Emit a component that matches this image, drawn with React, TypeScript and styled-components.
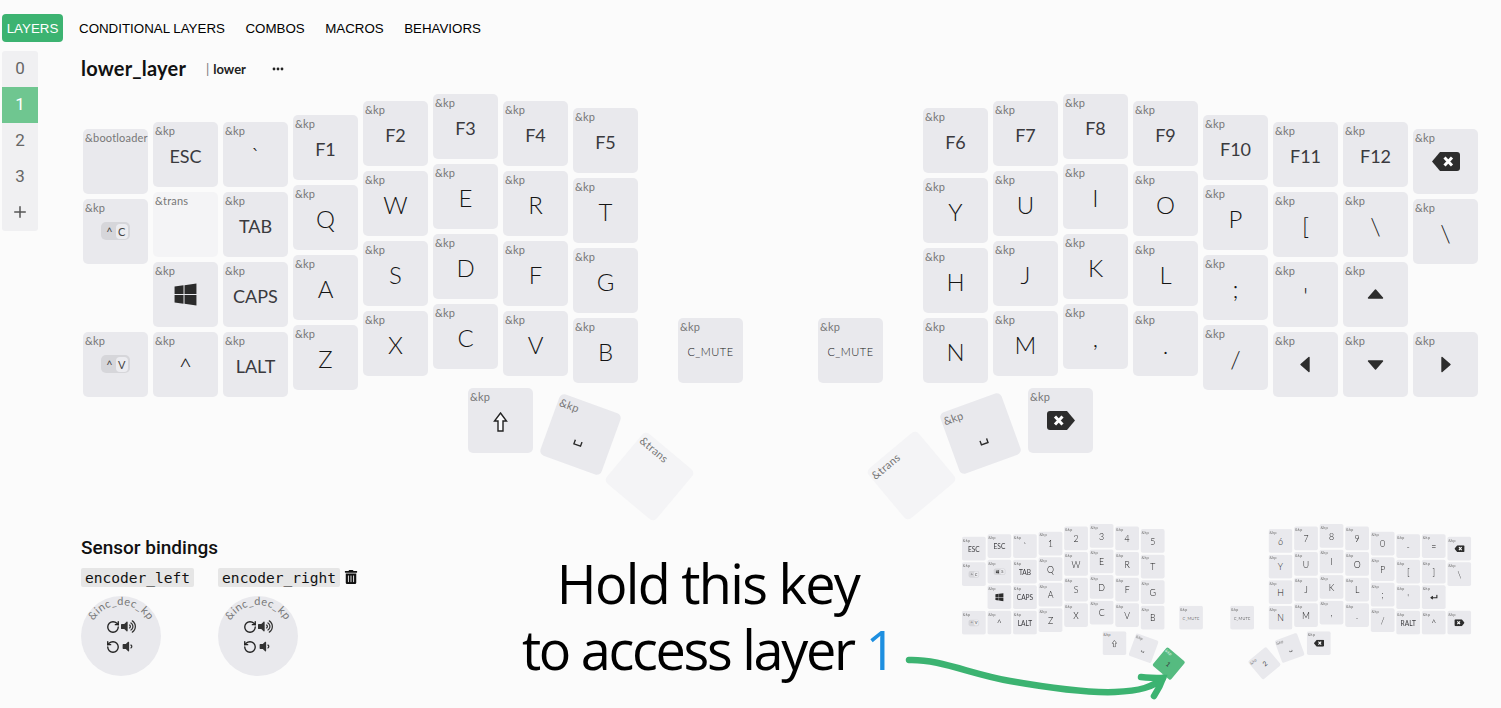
import React from 'react';
import styled, { createGlobalStyle } from 'styled-components';
import { FaWindows, FaVolumeUp, FaVolumeDown, FaTrashAlt } from 'react-icons/fa';
import { RotateCw, RotateCcw, Plus } from 'lucide-react';

const Global = createGlobalStyle`
  html, body { margin: 0; padding: 0; background: #fbfbfb; }
  body { font-family: "Lato", "Noto Sans", sans-serif; color: #222; overflow: hidden; }
  #root { width: 1501px; height: 708px; }
`;

const Page = styled.div`
  position: relative;
  width: 1501px;
  height: 708px;
  overflow: hidden;
`;
const Nav = styled.nav`
  display: flex;
  align-items: center;
  gap: 8.5px;
  padding: 14px 0 0 2px;
  height: 28px;
`;
const NavItem = styled.div<{ $active?: boolean }>`
  height: 28px;
  padding: 0 ${p => (p.$active ? '0' : '6px')};
  width: ${p => (p.$active ? '61px' : 'auto')};
  text-align: center;
  border-radius: 4px;
  font: 13.33px/29px "Liberation Sans", Arial, sans-serif;
  color: ${p => (p.$active ? '#fff' : '#000')};
  background: ${p => (p.$active ? '#3cb371' : 'transparent')};
  margin-right: ${p => (p.$active ? '1.5px' : '0')};
`;
const Body = styled.div`
  display: flex;
  padding: 9px 0 0 2px;
`;
const Sidebar = styled.ul`
  list-style: none;
  margin: 0;
  padding: 0;
  width: 36px;
  height: 180px;
  background: #f0f0f2;
  border-radius: 3px;
  overflow: hidden;
  flex: none;
`;
const LayerItem = styled.li<{ $active?: boolean }>`
  height: 36px;
  padding-bottom: 2px;
  box-sizing: border-box;
  display: flex;
  align-items: center;
  justify-content: center;
  font: 17px "Roboto", sans-serif;
  color: ${p => (p.$active ? '#fff' : '#666')};
  background: ${p => (p.$active ? '#6fc690' : 'transparent')};
`;
const Main = styled.main`
  flex: 1;
  padding-left: 43px;
`;
const Header = styled.header`
  display: flex;
  align-items: center;
  height: 36px;
`;
const Title = styled.h2`
  margin: 0;
  padding-bottom: 2px;
  font: 700 20px "Lato", sans-serif;
  letter-spacing: 0.2px;
  color: #111;
  width: 125px;
`;
const Nickname = styled.span`
  font: 700 13px "Lato", sans-serif;
  color: #222;
  width: 66px;
  &::before { content: '|'; color: #777; font-weight: 400; margin-right: 4px; }
`;
const Dots = styled.svg`
  width: 12px;
  height: 4px;
`;
const CanvasHolder = styled.div`
  position: relative;
  height: 443px;
  margin: 6.5px 0 0 2px;
`;
const Key = styled.div.attrs<{ $x: number; $y: number; $r?: number }>(p => ({
  style: { left: p.$x, top: p.$y, transform: p.$r ? `rotate(${p.$r}deg)` : undefined },
}))<{ $x: number; $y: number; $r?: number; $tone?: 'trans' | 'green' }>`
  position: absolute;
  width: 65px;
  height: 65px;
  border-radius: 5px;
  display: flex;
  align-items: center;
  justify-content: center;
  background: ${p => (p.$tone === 'trans' ? '#f4f4f6' : p.$tone === 'green' ? '#55bb80' : '#e9e9ed')};
  color: ${p => (p.$tone === 'green' ? '#fff' : '#2b2b2b')};
`;
const Behavior = styled.span<{ $green?: boolean }>`
  position: absolute;
  left: 2px;
  top: 2px;
  font: 400 11px/14px "Lato", sans-serif;
  letter-spacing: 0.2px;
  color: ${p => (p.$green ? '#e6f5ec' : '#777')};
`;
const Legend = styled.span<{ $size: number }>`
  font-size: ${p => p.$size}px;
  font-weight: ${p => (p.$size === 18 ? 400 : 300)};
  color: ${p => (p.$size === 18 ? '#3a3a3e' : '#151515')};
  letter-spacing: ${p => (p.$size > 12 ? 0 : 0.5)}px;
  line-height: 1;
  margin-top: ${p => Math.round(p.$size / 7)}px;
  white-space: nowrap;
`;
const ModPill = styled.span`
  display: inline-flex;
  align-items: center;
  gap: 3px;
  height: 18px;
  padding: 0 2px 0 5px;
  border-radius: 5px;
  background: #d6d6da;
  font-size: 11px;
  color: #444;
`;
const ModKey = styled.span`
  display: inline-flex;
  align-items: center;
  justify-content: center;
  width: 12px;
  height: 15px;
  border-radius: 4px;
  background: #ececf0;
`;
const Section = styled.section``;
const SectionTitle = styled.h3`
  margin: 0;
  font: 500 19px/22px "Roboto", sans-serif;
  color: #111;
`;
const Sensors = styled.div`
  display: flex;
  gap: 24px;
  margin-top: 9px;
`;
const Sensor = styled.div`
  display: flex;
  flex-direction: column;
`;
const SensorHead = styled.div`
  display: flex;
  align-items: center;
  gap: 4px;
`;
const Code = styled.code`
  display: block;
  height: 19px;
  padding: 0 4px;
  border-radius: 2px;
  background: #e6e6e6;
  font: 14.55px/20px "DejaVu Sans Mono", monospace;
  color: #111;
`;
const Dial = styled.div`
  position: relative;
  width: 80px;
  height: 80px;
  margin-top: 9px;
  border-radius: 50%;
  background: #e9e9ed;
  display: flex;
  flex-direction: column;
  align-items: center;
  justify-content: center;
  gap: 5px;
  padding-top: 2px;
  box-sizing: border-box;
`;
const DialArc = styled.svg`
  position: absolute;
  left: 0;
  top: 0;
  width: 80px;
  height: 80px;
  overflow: visible;
`;
const DialRow = styled.div`
  display: flex;
  align-items: center;
  gap: 1px;
  color: #333;
  height: 15px;
  width: 30px;
`;
const Overlay = styled.div`
  position: absolute;
  left: 0;
  top: 0;
  width: 0;
  height: 0;
`;
const Thumb = styled.div<{ $x: number; $y: number }>`
  position: absolute;
  left: ${p => p.$x}px;
  top: ${p => p.$y}px;
  width: 1400px;
  height: 440px;
  transform: scale(0.365);
  transform-origin: 0 0;
  filter: blur(1.3px);
`;
const Callout = styled.div`
  position: absolute;
  left: 456px;
  top: 550px;
  width: 500px;
  text-align: center;
  font: 400 54px/66px "Open Sans", sans-serif;
  color: #000;
`;
const CalloutLine = styled.div<{ $track: number; $shift?: number }>`
  letter-spacing: ${p => p.$track}px;
  margin-left: ${p => p.$shift ?? 0}px;
`;
const Blue = styled.span`
  color: #1e8fe0;
`;
const Arrow = styled.svg`
  position: absolute;
  left: 900px;
  top: 650px;
  width: 280px;
  height: 55px;
`;

/* ---- drawn legends ---- */
const Backspace = ({ flip }: { flip?: boolean }) => (
  <svg width="28" height="19" viewBox="0 0 28 19" style={flip ? { transform: 'scaleX(-1)' } : undefined}>
    <path d="M8 0H25a3 3 0 0 1 3 3V16a3 3 0 0 1-3 3H8L0 9.5Z" fill="#2d2d2d" />
    <path d="M12.5 5.5l7.5 8M20 5.5l-7.5 8" stroke="#fff" strokeWidth="3" />
  </svg>
);
const Tri = ({ dir }: { dir: 'up' | 'down' | 'left' | 'right' }) => {
  const deg = { up: 0, right: 90, down: 180, left: 270 }[dir];
  return (
    <svg width="17" height="17" viewBox="0 0 17 17" style={{ transform: `rotate(${deg}deg)` }}>
      <path d="M8.5 4L15.5 12H1.5Z" fill="#2d2d2d" stroke="#2d2d2d" strokeWidth="1.4" strokeLinejoin="round" />
    </svg>
  );
};
const Shift = () => (
  <svg width="15" height="20" viewBox="0 0 15 20" style={{ marginTop: 3 }}>
    <path d="M7.5 1L13.5 9H10V19H5V9H1.5Z" fill="#fbfbfd" stroke="#222" strokeWidth="1.4" />
  </svg>
);
const Space = () => (
  <svg width="10" height="6" viewBox="0 0 10 6" style={{ marginTop: 19 }}>
    <path d="M1.5 0V4.5H8.5V0" fill="none" stroke="#2b2b2b" strokeWidth="1.4" />
  </svg>
);
const Enter = () => (
  <svg width="24" height="16" viewBox="0 0 24 16">
    <path d="M20 1V9H6M9 5L4 9l5 4" fill="none" stroke="#2b2b2b" strokeWidth="3" />
  </svg>
);

/* ---- key data ---- */
type Spec = { l?: React.ReactNode; b?: string; size?: number; tone?: 'trans' | 'green' };
const t = (text: string): Spec => ({
  l: text,
  size: text === 'C_MUTE' ? 11 : text.length === 1 ? 24 : 18,
});
const icon = (node: React.ReactNode): Spec => ({ l: node });
const trans: Spec = { b: '&trans', tone: 'trans' };
const pill = (mod: React.ReactNode, k: string): Spec =>
  icon(
    <ModPill>
      {mod}
      <ModKey>{k}</ModKey>
    </ModPill>,
  );
const win = icon(<FaWindows size={25} color="#2b2b2b" />);

type Board = {
  left: Spec[][];
  right: Spec[][];
  lthumb: Spec[];
  rthumb: Spec[];
};
const strs = (a: string) => a.split(' ').map(t);

const leftStag = [35, 28, 28, 21, 7, 0, 7, 14];
const rightStag = [14, 7, 0, 7, 21, 28, 28, 35];

const main: Board = {
  left: [
    [{ b: '&bootloader' }, t('ESC'), t('`'), ...strs('F1 F2 F3 F4 F5')],
    [pill('^', 'C'), trans, t('TAB'), ...strs('Q W E R T')],
    [{}, win, t('CAPS'), ...strs('A S D F G')],
    [pill('^', 'V'), t('^'), t('LALT'), ...strs('Z X C V B')],
  ],
  right: [
    [...strs('F6 F7 F8 F9 F10 F11 F12'), icon(<Backspace />)],
    [...strs('Y U I O P [ \\ \\')],
    [...strs('H J K L ; \''), icon(<Tri dir="up" />), {}],
    [...strs('N M , . /'), icon(<Tri dir="left" />), icon(<Tri dir="down" />), icon(<Tri dir="right" />)],
  ],
  lthumb: [icon(<Shift />), icon(<Space />), trans],
  rthumb: [trans, icon(<Space />), icon(<Backspace flip />)],
};
const base: Board = {
  left: [
    [t('ESC'), t('ESC'), t('`'), ...strs('1 2 3 4 5')],
    [pill('^', 'C'), pill(<FaWindows size={10} />, 'S'), t('TAB'), ...strs('Q W E R T')],
    [{}, win, t('CAPS'), ...strs('A S D F G')],
    [pill('^', 'V'), t('^'), t('LALT'), ...strs('Z X C V B')],
  ],
  right: [
    [...strs('6 7 8 9 0 - ='), icon(<Backspace />)],
    [...strs('Y U I O P [ ] \\')],
    [...strs('H J K L ; \''), icon(<Enter />), {}],
    [...strs('N M , . / RALT ^'), icon(<Backspace flip />)],
  ],
  lthumb: [icon(<Shift />), icon(<Space />), { ...t('1'), size: 18, tone: 'green' }],
  rthumb: [{ ...t('2'), size: 18 }, icon(<Space />), icon(<Backspace />)],
};

const OneKey = ({ s, x, y, r }: { s: Spec; x: number; y: number; r?: number }) => (
  <Key $x={x} $y={y} $r={r} $tone={s.tone}>
    <Behavior $green={s.tone === 'green'}>{s.b ?? '&kp'}</Behavior>
    {s.size ? <Legend $size={s.size}>{s.l}</Legend> : s.l}
  </Key>
);

const Keys = ({ board }: { board: Board }) => (
  <>
    {board.left.map((row, ri) =>
      row.map((s, ci) => {
        if (ri === 2 && ci === 0) return null;
        const y = ri === 3 && ci === 0 ? 238 : leftStag[ci] + ri * 70;
        return <OneKey key={`l${ri}-${ci}`} s={s} x={ci * 70} y={y} />;
      }),
    )}
    {board.right.map((row, ri) =>
      row.map((s, ci) => {
        if (ri === 2 && ci === 7) return null;
        const y = ri === 3 && ci === 7 ? 238 : rightStag[ci] + ri * 70;
        return <OneKey key={`r${ri}-${ci}`} s={s} x={840 + ci * 70} y={y} />;
      }),
    )}
    <OneKey s={t('C_MUTE')} x={595} y={224} />
    <OneKey s={t('C_MUTE')} x={735} y={224} />
    <OneKey s={board.lthumb[0]} x={385} y={294} />
    <OneKey s={board.lthumb[1]} x={464.5} y={308} r={20} />
    <OneKey s={board.lthumb[2]} x={533.5} y={350} r={40} />
    <OneKey s={board.rthumb[0]} x={795.5} y={349} r={-40} />
    <OneKey s={board.rthumb[1]} x={864.5} y={307} r={-20} />
    <OneKey s={board.rthumb[2]} x={945} y={294} />
  </>
);

const EncoderDial = ({ id }: { id: string }) => (
  <Dial>
    <DialArc viewBox="0 0 80 80">
      <defs>
        <path id={id} d="M8 41A32 32 0 0 1 72 41" fill="none" />
      </defs>
      <text fontFamily="Lato, sans-serif" fontSize="11" fill="#777" letterSpacing="0.5">
        <textPath href={`#${id}`} startOffset="50%" textAnchor="middle">
          &amp;inc_dec_kp
        </textPath>
      </text>
    </DialArc>
    <DialRow>
      <RotateCw size={14} strokeWidth={2.3} color="#222" />
      <FaVolumeUp size={15} color="#333" />
    </DialRow>
    <DialRow>
      <RotateCcw size={14} strokeWidth={2.3} color="#222" />
      <FaVolumeDown size={13} color="#333" />
    </DialRow>
  </Dial>
);

export default function App() {
  return (
    <Page>
      <Global />
      <Nav>
        <NavItem $active>LAYERS</NavItem>
        <NavItem>CONDITIONAL LAYERS</NavItem>
        <NavItem>COMBOS</NavItem>
        <NavItem>MACROS</NavItem>
        <NavItem>BEHAVIORS</NavItem>
      </Nav>
      <Body>
        <Sidebar>
          <LayerItem>0</LayerItem>
          <LayerItem $active>1</LayerItem>
          <LayerItem>2</LayerItem>
          <LayerItem>3</LayerItem>
          <LayerItem>
            <Plus size={18} color="#555" />
          </LayerItem>
        </Sidebar>
        <Main>
          <Header>
            <Title>lower_layer</Title>
            <Nickname>lower</Nickname>
            <Dots viewBox="0 0 12 4">
              <circle cx="2" cy="2" r="1.4" fill="#222" />
              <circle cx="6" cy="2" r="1.4" fill="#222" />
              <circle cx="10" cy="2" r="1.4" fill="#222" />
            </Dots>
          </Header>
          <CanvasHolder>
            <Keys board={main} />
          </CanvasHolder>
          <Section>
            <SectionTitle>Sensor bindings</SectionTitle>
            <Sensors>
              <Sensor>
                <SensorHead>
                  <Code>encoder_left</Code>
                </SensorHead>
                <EncoderDial id="arc-left" />
              </Sensor>
              <Sensor>
                <SensorHead>
                  <Code>encoder_right</Code>
                  <FaTrashAlt size={14} color="#111" />
                </SensorHead>
                <EncoderDial id="arc-right" />
              </Sensor>
            </Sensors>
          </Section>
        </Main>
      </Body>
      <Overlay>
        <Thumb $x={962.3} $y={524.2}>
          <Keys board={base} />
        </Thumb>
        <Callout>
          <CalloutLine $track={-1.7} $shift={4}>Hold this key</CalloutLine>
          <CalloutLine $track={-2.3} $shift={4}>
            to access layer <Blue>1</Blue>
          </CalloutLine>
        </Callout>
        <Arrow viewBox="0 0 280 55">
          <path
            d="M9 10C40 9 70 24 110 31C150 38 190 43 215 42C240 41 253 37 263 28"
            fill="none"
            stroke="#3cb371"
            strokeWidth="6.5"
            strokeLinecap="round"
          />
          <path d="M241 27C250 28 256 28 263 28C261 34 258 40 254 46" fill="none" stroke="#3cb371" strokeWidth="6.5" strokeLinecap="round" />
        </Arrow>
      </Overlay>
    </Page>
  );
}
